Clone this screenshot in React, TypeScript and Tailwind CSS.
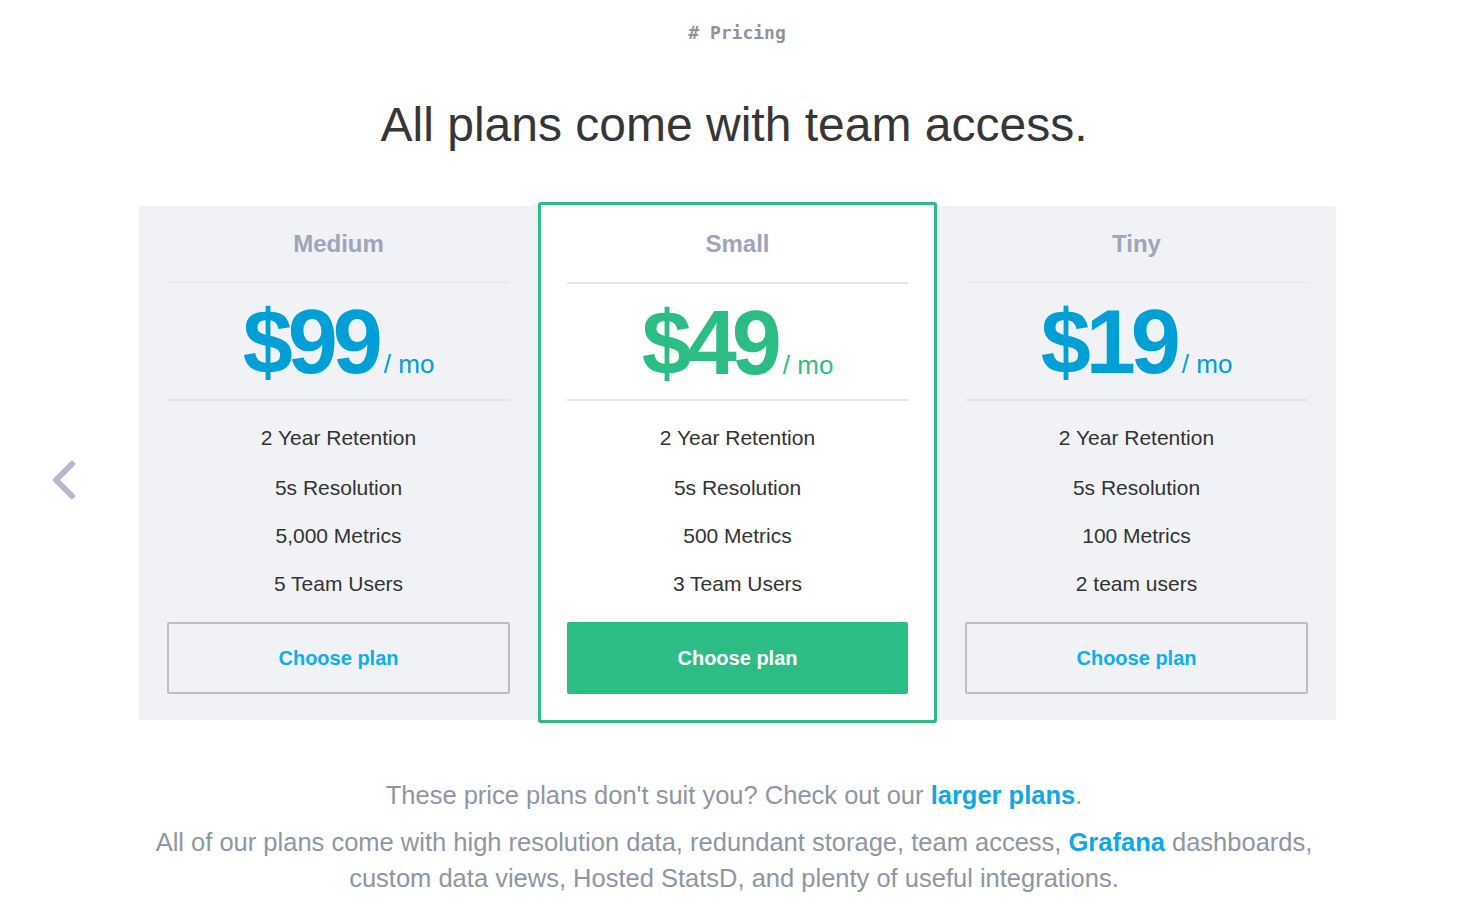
import React from "react";

type Plan = {
  name: string;
  price: string;
  features: string[];
  featured?: boolean;
};

const plans: Plan[] = [
  { name: "Medium", price: "$99", features: ["2 Year Retention", "5s Resolution", "5,000 Metrics", "5 Team Users"] },
  { name: "Small", price: "$49", features: ["2 Year Retention", "5s Resolution", "500 Metrics", "3 Team Users"], featured: true },
  { name: "Tiny", price: "$19", features: ["2 Year Retention", "5s Resolution", "100 Metrics", "2 team users"] },
];

function Card({ plan }: { plan: Plan }) {
  const f = plan.featured;
  return (
    <div
      className={
        f
          ? "w-[399px] h-[521px] bg-white border-[3px] border-[#2bbd84] rounded-[3px] px-[26px] pt-[27px] pb-[26px] flex flex-col"
          : "w-[399px] h-[514px] bg-[#f1f2f6] rounded-[2px] px-[28px] pt-[26px] pb-[26px] flex flex-col"
      }
    >
      <div className="h-[24px] flex items-center justify-center text-[24px] font-bold text-[#9ea4bb] leading-none">
        {plan.name}
      </div>
      <div className="mt-[26px] h-[2px] bg-[#e4e5eb]" />
      <div className="h-[116px] flex items-center justify-center pt-[2px]">
        <div className="flex items-baseline">
          <span
            className={
              "text-[90px] font-bold leading-none tracking-[-5px] " +
              (f ? "text-[#2bbd84]" : "text-[#009fd6]")
            }
          >
            {plan.price}
          </span>
          <span className={"ml-[6px] text-[26px] leading-none " + (f ? "text-[#2bbd84]" : "text-[#009fd6]")}>
            / mo
          </span>
        </div>
      </div>
      <div className="h-[2px] bg-[#e4e5eb]" />
      <div className="flex flex-col items-center pt-[25px] text-[21px] text-[#333333] leading-[24px]">
        {plan.features.map((x, i) => (
          <div key={i} className={i === 0 ? "" : i === 1 ? "mt-[26px]" : "mt-[24px]"}>
            {x}
          </div>
        ))}
      </div>
      <div className="mt-[26px]">
        {f ? (
          <button className="w-full h-[72px] bg-[#2bbd84] rounded-[2px] text-white text-[20px] font-bold">
            Choose plan
          </button>
        ) : (
          <button className="w-full h-[72px] border-2 border-[#b9bdcd] rounded-[2px] text-[#0eaee9] text-[20px] font-bold">
            Choose plan
          </button>
        )}
      </div>
    </div>
  );
}

export default function App() {
  return (
    <div className="w-[1468px] h-[918px] bg-white overflow-hidden" style={{ fontFamily: "'Liberation Sans', Arial, sans-serif" }}>
      <div className="pt-[22px] pl-[6px] text-center text-[18px] font-bold text-[#8f949c] leading-[22px]" style={{ fontFamily: "'DejaVu Sans Mono', monospace" }}>
        # Pricing
      </div>
      <h1 className="mt-[51px] text-center text-[48px] text-[#363636] leading-[60px]">
        All plans come with team access.
      </h1>
      <div className="mt-[47px] flex items-center">
        <div className="w-[139px] flex justify-center pr-[12px] pt-[36px]">
          <svg width="30" height="44" viewBox="0 0 30 44">
            <polyline points="23,5 7,21 23,37" fill="none" stroke="#b5bacb" strokeWidth="6" strokeLinecap="round" strokeLinejoin="round" />
          </svg>
        </div>
        <div className="flex items-center">
          {plans.map((p) => (
            <Card key={p.name} plan={p} />
          ))}
        </div>
      </div>
      <div className="mt-[54px] text-center text-[25.5px] text-[#8e96a3] leading-[36px]">
        These price plans don't suit you? Check out our{" "}
        <span className="font-bold text-[#0fa8e6]">larger plans</span>.
      </div>
      <div className="mt-[11px] mx-auto w-[1180px] text-center text-[25.5px] text-[#8e96a3] leading-[36px]">
        All of our plans come with high resolution data, redundant storage, team access,{" "}
        <span className="font-bold text-[#0fa8e6]">Grafana</span> dashboards, custom data views, Hosted StatsD, and plenty of useful integrations.
      </div>
    </div>
  );
}
